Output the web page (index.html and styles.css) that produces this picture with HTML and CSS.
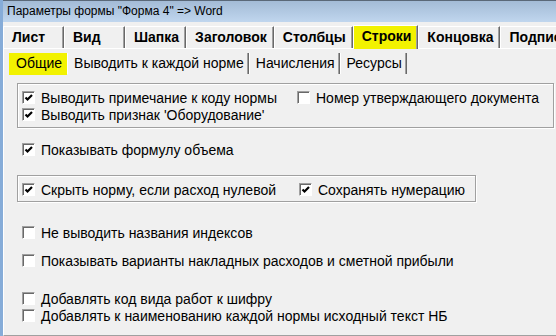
FILE: index.html
```html
<!DOCTYPE html>
<html lang="ru">
<head>
    <meta charset="UTF-8">
    <meta name="viewport" content="width=device-width, initial-scale=1.0">
    <title>Параметры формы</title>
    <link rel="stylesheet" href="styles.css">
</head>
<body>
    <div class="window">
        <!-- Title -->
        <div class="titlebar">Параметры формы "Форма 4" =&gt; Word</div>

        <!-- Main tabs -->
        <div class="tabs">
            <div class="tab">Лист</div>
            <div class="tab">Вид</div>
            <div class="tab">Шапка</div>
            <div class="tab">Заголовок</div>
            <div class="tab">Столбцы</div>
            <div class="tab active">Строки</div>
            <div class="tab">Концовка</div>
            <div class="tab">Подписи</div>
        </div>

        <div class="page">
            <!-- Sub tabs -->
            <div class="subtabs">
                <div class="subtab active">Общие</div>
                <div class="subtab">Выводить к каждой норме</div>
                <div class="subtab">Начисления</div>
                <div class="subtab">Ресурсы</div>
            </div>

            <div class="sheet">
                <div class="group group-notes">
                    <label class="check"><span class="box on"></span>Выводить примечание к коду нормы</label>
                    <label class="check"><span class="box"></span>Номер утверждающего документа</label>
                    <label class="check"><span class="box on"></span>Выводить признак 'Оборудование'</label>
                </div>

                <label class="check row-formula"><span class="box on"></span>Показывать формулу объема</label>

                <div class="group group-hide">
                    <label class="check"><span class="box on"></span>Скрыть норму, если расход нулевой</label>
                    <label class="check"><span class="box on"></span>Сохранять нумерацию</label>
                </div>

                <label class="check row-index"><span class="box"></span>Не выводить названия индексов</label>
                <label class="check row-variants"><span class="box"></span>Показывать варианты накладных расходов и сметной прибыли</label>
                <label class="check row-code"><span class="box"></span>Добавлять код вида работ к шифру</label>
                <label class="check"><span class="box"></span>Добавлять к наименованию каждой нормы исходный текст НБ</label>
            </div>
        </div>
    </div>
</body>
</html>
```

FILE: styles.css
```css
body {
    margin: 0;
    background-color: #f0f0f0;
    font-family: "Liberation Sans", Arial, sans-serif;
    color: #000;
}
.window {
    width: 556px;
    height: 336px;
    box-sizing: border-box;
    border-left: 3px solid #86acd8;
    overflow: hidden;
}
.titlebar {
    height: 22px;
    box-sizing: border-box;
    border-top: 1px solid #5a6878;
    background: linear-gradient(#a3bbd6, #c0d6ee);
    padding-left: 4px;
    font-size: 12px;
    line-height: 20px;
    white-space: nowrap;
}

/* main tabs */
.tabs {
    display: flex;
    height: 26px;
    padding-top: 4px;
    box-sizing: border-box;
    white-space: nowrap;
}
.tab {
    flex: none;
    min-width: 61px;
    height: 22px;
    box-sizing: border-box;
    padding: 0 6px 0 8px;
    border-top: 1px solid #fff;
    border-left: 1px solid #fff;
    border-right: 1px solid #696969;
    box-shadow: inset -1px 0 #a0a0a0;
    font-size: 14px;
    font-weight: bold;
    line-height: 21px;
}
.tab.active {
    background-color: #f2f200;
    height: 24px;
    margin-top: -1px;
}

/* page under the tabs */
.page {
    height: 288px;
    box-sizing: border-box;
    border-top: 1px solid #fff;
    border-left: 1px solid #fff;
    border-bottom: 1px solid #a0a0a0;
    box-shadow: 0 1px 0 #696969;
}
.subtabs {
    display: flex;
    padding: 4px 0 0 5px;
    height: 27px;
    box-sizing: border-box;
    white-space: nowrap;
}
.subtab {
    flex: none;
    height: 21px;
    box-sizing: border-box;
    padding: 0 4px 0 6px;
    border-left: 1px solid #fff;
    border-right: 1px solid #696969;
    box-shadow: inset -1px 0 #a0a0a0;
    font-size: 14px;
    line-height: 20px;
}
.subtab.active {
    background-color: #f2f200;
    height: 22px;
    border-color: #f2f200;
    box-shadow: none;
}
.sheet {
    display: flex;
    flex-direction: column;
    padding: 0 2px 0 13px;
}

/* group boxes */
.group {
    display: grid;
    border: 1px solid #a0a0a0;
    box-shadow: 1px 1px 0 #fff, inset 1px 1px 0 #fff;
    padding: 5px 0 3px 4px;
}
.group-notes {
    margin-top: 7px;
    grid-template-columns: 275px 1fr;
    padding-bottom: 4px;
}
.group-hide {
    margin-top: 17px;
    width: 459px;
    box-sizing: border-box;
    grid-template-columns: 277px 1fr;
}

/* checkboxes */
.check {
    display: flex;
    align-items: center;
    height: 17px;
    gap: 6px;
    font-size: 14px;
    white-space: nowrap;
}
.sheet > .check {
    padding-left: 5px;
}
.box {
    width: 13px;
    height: 13px;
    box-sizing: border-box;
    flex: none;
    background-color: #fff;
    border: 1px solid;
    border-color: #a0a0a0 #fff #fff #a0a0a0;
    box-shadow: inset 1px 1px 0 #696969;
}
.box.on {
    background: #fff url("data:image/svg+xml,%3Csvg xmlns='http://www.w3.org/2000/svg' width='11' height='11'%3E%3Cpath d='M2.5 4.5l2 2 4.5-4.5' fill='none' stroke='%23000' stroke-width='2.2'/%3E%3C/svg%3E") no-repeat 0 1px;
}
.row-formula {
    margin-top: 13px;
}
.row-index {
    margin-top: 22px;
}
.row-variants {
    margin-top: 11px;
}
.row-code {
    margin-top: 21px;
}
```
